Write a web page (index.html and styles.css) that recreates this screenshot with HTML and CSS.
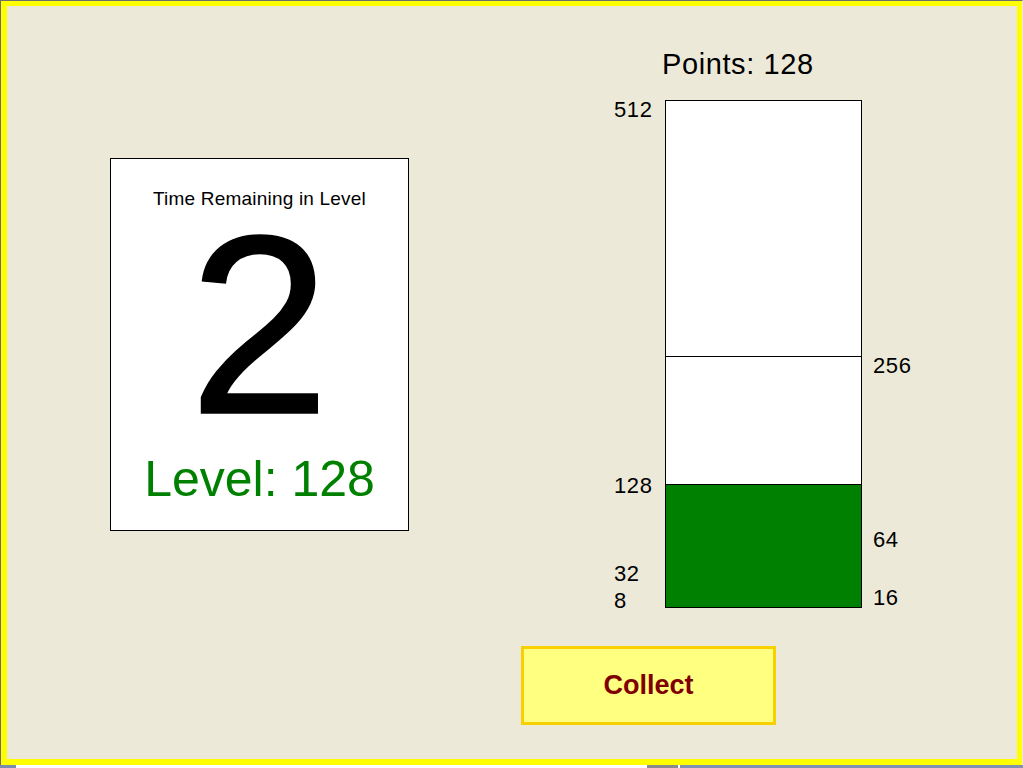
FILE: index.html
```html
<!DOCTYPE html>
<html>
<head>
<meta charset="utf-8">
<link rel="stylesheet" href="styles.css">
</head>
<body>
<div class="frame">
  <div class="stage">
    <div class="left">
      <div class="card">
        <div class="card-title">Time Remaining in Level</div>
        <div class="card-count">2</div>
        <div class="card-level">Level: 128</div>
      </div>
    </div>
    <div class="right">
      <div class="points">Points: 128</div>
      <div class="chart">
        <div class="bar">
          <div class="seg seg-top"></div>
          <div class="seg seg-mid"></div>
          <div class="seg seg-low"></div>
        </div>
        <span class="tick tick-512">512</span>
        <span class="tick tick-128">128</span>
        <span class="tick tick-32">32</span>
        <span class="tick tick-8">8</span>
        <span class="tick tick-256">256</span>
        <span class="tick tick-64">64</span>
        <span class="tick tick-16">16</span>
      </div>
      <button class="collect">Collect</button>
    </div>
  </div>
</div>
<div class="taskbar">
  <span class="tb tb-a"></span>
  <span class="tb-gap"></span>
  <span class="tb tb-b"></span>
  <span class="tb tb-c"></span>
</div>
</body>
</html>
```

FILE: styles.css
```css
html, body {
  margin: 0;
  padding: 0;
  background: #ffffff;
  font-family: "Liberation Sans", Arial, sans-serif;
}

.frame {
  box-sizing: border-box;
  width: 1023px;
  height: 765px;
  border-top: 1px solid #6e6e6e;
  border-left: 1px solid #6e6e6e;
  border-right: 1px solid #e8e8e8;
}

.stage {
  box-sizing: border-box;
  height: 764px;
  background: #ece9d8;
  border-style: solid;
  border-color: #ffff00;
  border-width: 5px 5px 6px 6px;
  display: flex;
}

.left {
  width: 414px;
  padding-left: 103px;
  padding-top: 152px;
  box-sizing: border-box;
}

.card {
  box-sizing: border-box;
  width: 299px;
  height: 373px;
  background: #ffffff;
  border: 1px solid #000000;
  display: flex;
  flex-direction: column;
  align-items: center;
  padding-top: 29px;
}

.card-title {
  font-size: 19px;
  line-height: 22px;
  letter-spacing: 0.2px;
  color: #000;
}

.card-count {
  margin-top: 18px;
  font-size: 254px;
  line-height: 194px;
  height: 194px;
  color: #000;
  -webkit-text-stroke: 1.5px #000;
}

.card-level {
  margin-top: 29px;
  font-size: 50px;
  line-height: 56px;
  color: #008000;
}

.right {
  display: flex;
  flex-direction: column;
  align-items: flex-start;
  padding-left: 100px;
  padding-top: 42px;
}

.points {
  margin-left: 141px;
  font-size: 29px;
  line-height: 32px;
  letter-spacing: 0.6px;
  color: #000;
}

.chart {
  position: relative;
  margin-top: 20px;
  margin-left: 94px;
  padding-left: 50px;
}

.bar {
  box-sizing: border-box;
  width: 197px;
  height: 508px;
  border: 1px solid #000;
  background: #fff;
  display: flex;
  flex-direction: column;
}

.seg-top {
  height: 255px;
}

.seg-mid {
  height: 127px;
  border-top: 1px solid #000;
}

.seg-low {
  height: 122px;
  border-top: 1px solid #000;
  background: #008000;
}

.tick {
  position: absolute;
  font-size: 22px;
  line-height: 22px;
  color: #000;
  letter-spacing: 0.6px;
}

.tick-512 { left: -1px; top: -1px; }
.tick-128 { left: -1px; top: 375px; }
.tick-32 { left: -1px; top: 463px; }
.tick-8 { left: -1px; top: 490px; }
.tick-256 { left: 258px; top: 255px; }
.tick-64 { left: 258px; top: 429px; }
.tick-16 { left: 258px; top: 487px; }

.collect {
  margin-top: 38px;
  box-sizing: border-box;
  width: 255px;
  height: 79px;
  background: #ffff80;
  border: 3px solid #f8d000;
  color: #800000;
  font-family: "Liberation Sans", Arial, sans-serif;
  font-weight: bold;
  font-size: 27px;
  padding: 0;
}

.taskbar {
  height: 3px;
  display: flex;
  background: #ffffff;
}

.tb-a {
  width: 16px;
  background: #7b8bb0;
}

.tb-gap {
  width: 631px;
}

.tb-b {
  width: 31px;
  background: #8a8a8a;
}

.tb-c {
  flex: 1;
  margin-left: 2px;
  background: #7f92b2;
}
```
